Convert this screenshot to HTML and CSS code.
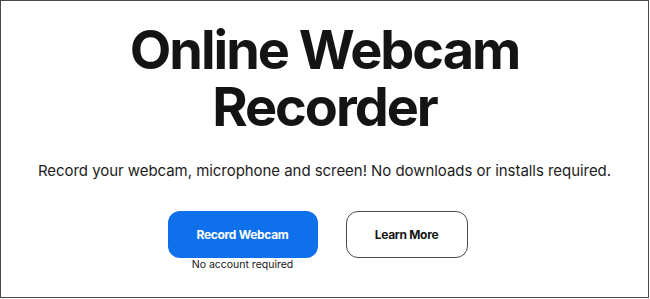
FILE: index.html
```html
<!DOCTYPE html>
<html lang="en">
<head>
<meta charset="utf-8">
<title>Online Webcam Recorder</title>
<link rel="stylesheet" href="styles.css">
</head>
<body>
<main class="frame">
  <h1 class="title">Online Webcam<br>Recorder</h1>
  <p class="lead">Record your webcam, microphone and screen! No downloads or installs required.</p>
  <div class="actions">
    <div class="primary-wrap">
      <a class="btn btn-primary" href="#">Record Webcam</a>
      <span class="note">No account required</span>
    </div>
    <a class="btn btn-outline" href="#">Learn More</a>
  </div>
</main>
</body>
</html>
```

FILE: styles.css
```css
* { box-sizing: border-box; }
html, body { margin: 0; padding: 0; background: #fff; }
body { font-family: "Inter", "Liberation Sans", sans-serif; color: #161616; }

.frame {
  width: 649px;
  height: 298px;
  border: 1px solid #484848;
  display: flex;
  flex-direction: column;
  align-items: center;
  padding-top: 20px;
}

.title {
  margin: 0;
  font-size: 54px;
  line-height: 57px;
  font-weight: 700;
  text-align: center;
  letter-spacing: -2px;
  color: #141414;
}

.lead {
  margin: 26px 0 0;
  font-size: 15px;
  line-height: 20px;
  font-weight: 400;
  letter-spacing: -0.05px;
  color: #1c1c1c;
}

.actions {
  margin-top: 30px;
  display: flex;
  gap: 28px;
  align-items: flex-start;
  padding-right: 14px;
}

.primary-wrap {
  display: flex;
  flex-direction: column;
  align-items: center;
}

.btn {
  display: flex;
  align-items: center;
  justify-content: center;
  height: 47px;
  border-radius: 12px;
  font-size: 12px;
  font-weight: 700;
  letter-spacing: -0.3px;
  text-decoration: none;
}

.btn-primary {
  width: 150px;
  background: #0e71eb;
  color: #fff;
}

.btn-outline {
  width: 122px;
  border: 1px solid #4a4a4a;
  color: #161616;
}

.note {
  margin-top: 0;
  font-size: 10.5px;
  line-height: 14px;
  color: #161616;
}
```
